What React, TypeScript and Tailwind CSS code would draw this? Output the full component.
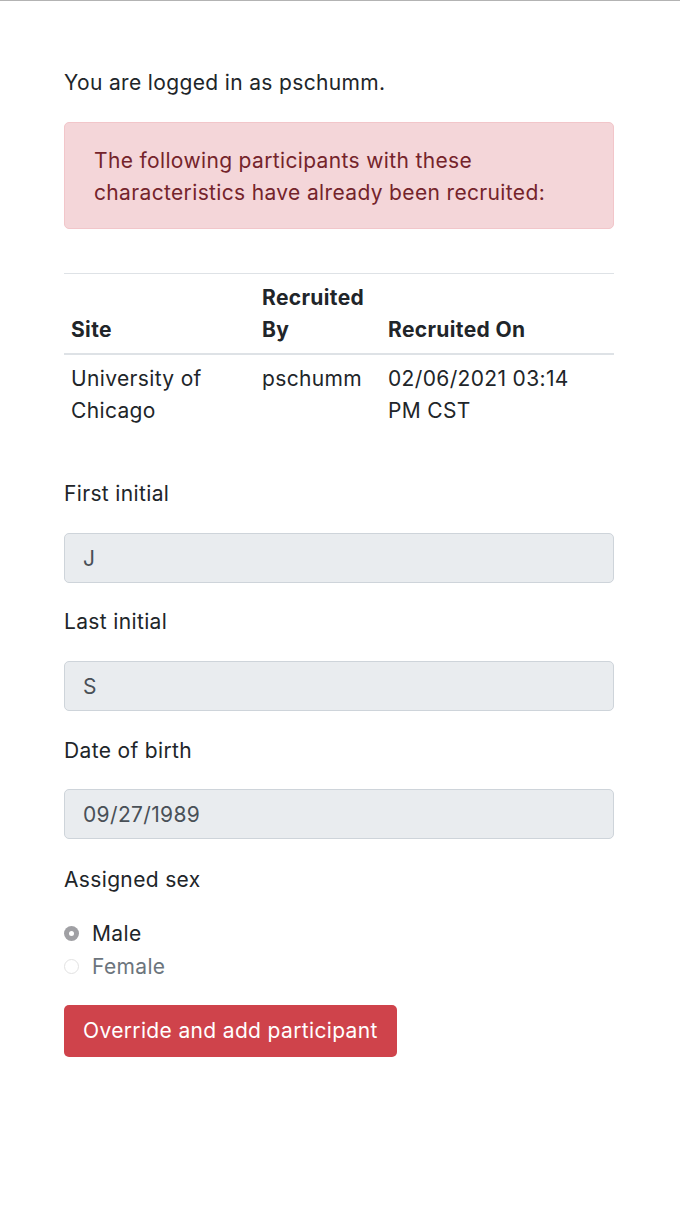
export default function App() {
  const font = { fontFamily: 'Inter, "Noto Sans", sans-serif' }
  const inputCls =
    'h-[50px] w-full rounded-[5px] border border-[#ced4da] bg-[#e9ecef] px-[18px] text-[21px] tracking-[0.35px] text-[#495057]'

  return (
    <div className="min-h-[1216px] bg-white border-t border-[#b3b3b3] text-[#212529] text-[21px] tracking-[0.35px] leading-[32px]" style={font}>
      <div className="pl-[64px] pr-[66px] pt-[66px]">
        <p>You are logged in as pschumm.</p>

        {/* Duplicate warning */}
        <div className="mt-[23px] rounded-[5px] border border-[#f2c6ca] bg-[#f4d6d9] px-[29px] pt-[22px] pb-[19px] text-[#74242b]">
          The following participants with these characteristics have already been recruited:
        </div>

        {/* Existing participants */}
        <table className="mt-[44px] w-full border-collapse text-left">
          <thead>
            <tr className="border-t border-[#dee2e6] border-b-2 border-b-[#dee2e6] align-bottom">
              <th className="w-[191px] px-[7px] pt-[8px] pb-[7px] font-bold">Site</th>
              <th className="w-[126px] px-[7px] pt-[8px] pb-[7px] font-bold">Recruited By</th>
              <th className="px-[7px] pt-[8px] pb-[7px] font-bold">Recruited On</th>
            </tr>
          </thead>
          <tbody>
            <tr className="align-top">
              <td className="px-[7px] pt-[8px] pb-[7px]">University of Chicago</td>
              <td className="px-[7px] pt-[8px] pb-[7px]">pschumm</td>
              <td className="pl-[7px] pr-[12px] pt-[8px] pb-[7px]">02/06/2021 03:14 PM CST</td>
            </tr>
          </tbody>
        </table>

        <form className="mt-[44px] flex flex-col" onSubmit={e => e.preventDefault()}>
          <label className="mb-[23px]">First initial</label>
          <input disabled value="J" className={inputCls} style={font} />

          <label className="mt-[23px] mb-[23px]">Last initial</label>
          <input disabled value="S" className={inputCls} style={font} />

          <label className="mt-[24px] mb-[22px]">Date of birth</label>
          <input disabled value="09/27/1989" className={inputCls} style={font} />

          <label className="mt-[25px]">Assigned sex</label>

          <div className="mt-[21px] flex flex-col leading-[33px]">
            <div className="flex items-center gap-[13px]">
              <span className="flex h-[15px] w-[15px] items-center justify-center rounded-full bg-[#a0a0a4]">
                <span className="h-[5px] w-[5px] rounded-full bg-white" />
              </span>
              <span>Male</span>
            </div>
            <div className="flex items-center gap-[13px] text-[#6c757d]">
              <span className="h-[15px] w-[15px] rounded-full border border-[#e2e2e2] bg-white" />
              <span>Female</span>
            </div>
          </div>

          <div className="mt-[22px]">
            <button
              type="submit"
              className="h-[52px] rounded-[5px] bg-[#cf434b] px-[19px] text-[21px] tracking-[0.35px] text-white"
              style={font}
            >
              Override and add participant
            </button>
          </div>
        </form>
      </div>
    </div>
  )
}
